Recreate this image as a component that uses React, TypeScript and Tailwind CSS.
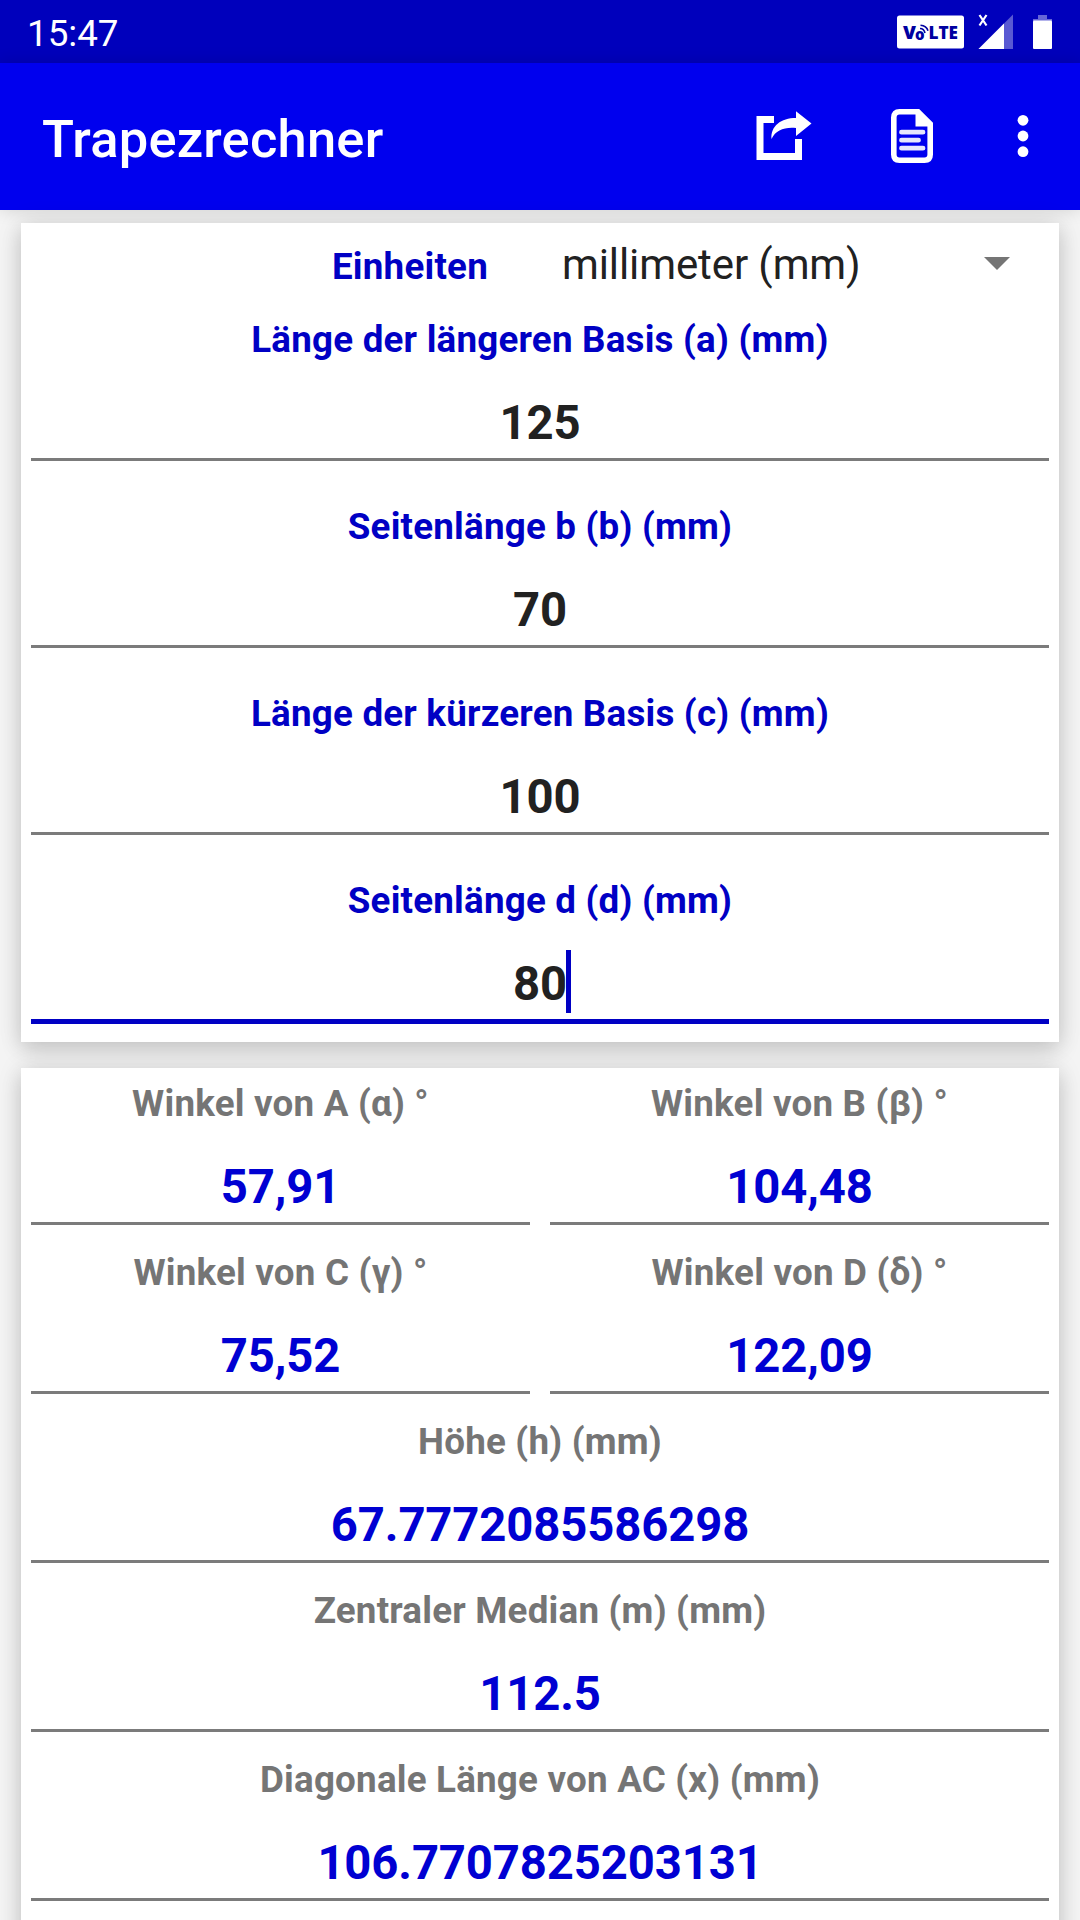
import { useState } from 'react';
import clsx from 'clsx';

type FieldProps = {
  label: string;
  value: string;
  result?: boolean;
  focused?: boolean;
  className?: string;
};

const inputs = [
  { id: 'a', label: 'Länge der längeren Basis (a) (mm)', value: '125' },
  { id: 'b', label: 'Seitenlänge b (b) (mm)', value: '70' },
  { id: 'c', label: 'Länge der kürzeren Basis (c) (mm)', value: '100' },
  { id: 'd', label: 'Seitenlänge d (d) (mm)', value: '80' },
];

const angles = [
  { label: 'Winkel von A (α) °', value: '57,91' },
  { label: 'Winkel von B (β) °', value: '104,48' },
  { label: 'Winkel von C (γ) °', value: '75,52' },
  { label: 'Winkel von D (δ) °', value: '122,09' },
];

const results = [
  { label: 'Höhe (h) (mm)', value: '67.7772085586298' },
  { label: 'Zentraler Median (m) (mm)', value: '112.5' },
  { label: 'Diagonale Länge von AC (x) (mm)', value: '106.7707825203131' },
];

function Field({ label, value, result, focused, className }: FieldProps) {
  return (
    <div className={clsx('flex flex-col text-center font-bold', className)}>
      <div
        className={clsx(
          'text-[36.75px] leading-[52px] tracking-[0.21px] whitespace-nowrap',
          result ? 'text-[#757575]' : 'text-[#0000c4]'
        )}>
        {label}
      </div>
      <div
        className={clsx(
          'pt-[26px] pb-[3px] text-[47.25px] leading-[63px] tracking-[-0.13px]',
          result ? 'text-[#0000d2]' : 'text-[#212121]',
          focused
            ? 'border-b-[5px] border-[#0000c4]'
            : 'border-b-[3px] border-[#7b7b7b]'
        )}>
        <span className="relative inline-block">
          {value}
          {focused && (
            <span className="absolute -top-[3px] left-full -ml-px h-[63px] w-[5px] bg-[#0000c4]" />
          )}
        </span>
      </div>
    </div>
  );
}

function StatusBar() {
  return (
    <div className="flex h-[63px] shrink-0 items-center justify-between bg-[#0000bc] pr-7 pl-[27px] text-white">
      <span className="pt-1 text-[36.75px] leading-[43px]">15:47</span>
      <div className="flex items-center">
        {/* VoLTE */}
        <svg width="67" height="34" viewBox="0 0 67 34" className="mr-[14px]">
          <rect width="67" height="33" y="0.5" rx="2.5" fill="#fff" />
          <g
            fill="#0000a0"
            fontFamily="'Open Sans', sans-serif"
            fontWeight="800"
            fontSize="18">
            <text x="6" y="24" textLength="13" lengthAdjust="spacingAndGlyphs">V</text>
            <text x="18" y="24.5" fontSize="15">o</text>
            <text x="31.500" y="24" textLength="29.500" lengthAdjust="spacingAndGlyphs">LTE</text>
          </g>
          <path
            d="M23 13.500q4 0 5 4.500M23.500 10.200q6 .5 7.500 5.500"
            fill="none"
            stroke="#0000a0"
            strokeWidth="1.6"
          />
        </svg>
        {/* Signal */}
        <svg width="36" height="36" viewBox="0 0 36 36" className="mr-[19px]">
          <path d="M0.500 35L35 0.500V35Z" fill="#fff" fillOpacity="0.35" />
          <path d="M0.500 35L26 9.500V35Z" fill="#fff" />
          <path d="M1.500 1L8.500 11.500M8.500 1L1.500 11.500" stroke="#fff" strokeWidth="2.2" />
        </svg>
        {/* Battery */}
        <svg width="19" height="34" viewBox="0 0 19 34">
          <path d="M5 0H14V4H19V6H0V4H5Z" fill="#fff" fillOpacity="0.4" />
          <rect y="5.500" width="19" height="28.500" rx="1" fill="#fff" />
        </svg>
      </div>
    </div>
  );
}

function AppBar() {
  return (
    <header className="flex h-[147px] shrink-0 items-center justify-between bg-[#0000ee] pr-[51px] pl-[42px] text-white shadow-[0_0_16px_rgba(0,0,0,0.14)]">
      <h1 className="pt-1 text-[52.5px] leading-[62px] font-medium tracking-[0.2px]">
        Trapezrechner
      </h1>
      <div className="flex items-center pb-0.5">
        <button aria-label="Teilen" className="mr-[79px]">
          <svg width="56" height="50" viewBox="0 0 56 50" className="block">
            <path
              d="M18 8.500H4V45.500H42.500V28"
              fill="none"
              stroke="#fff"
              strokeWidth="7"
            />
            <path d="M40 0.300L55.500 12.500L40 25V17C28 16 20 19 15.500 28C14.500 15 25 7 40 7Z" fill="#fff" />
          </svg>
        </button>
        <button aria-label="Bericht" className="mr-[84px]">
          <svg width="42" height="54" viewBox="0 0 42 54" className="block">
            <path
              d="M27 2.800H8.500Q2.800 2.800 2.800 8.500V45.500Q2.800 51.200 8.500 51.200H33.500Q39.200 51.200 39.200 45.500V15Z"
              fill="none"
              stroke="#fff"
              strokeWidth="5.600"
            />
            <path d="M24.500 1V17.500H41Z" fill="#fff" />
            <path
              d="M10.500 23.200H32M10.500 31.200H27.500M10.500 39.200H32"
              stroke="#fff"
              strokeWidth="4.800"
              strokeLinecap="round"
              opacity="0.9"
            />
          </svg>
        </button>
        <button aria-label="Mehr">
          <svg width="12" height="44" viewBox="0 0 12 44" className="block" fill="#fff">
            <circle cx="6" cy="6.300" r="5.400" />
            <circle cx="6" cy="22" r="5.400" />
            <circle cx="6" cy="37.700" r="5.400" />
          </svg>
        </button>
      </div>
    </header>
  );
}

export default function App() {
  const [active] = useState('d');

  return (
    <div className="flex h-[1920px] w-[1080px] flex-col overflow-hidden bg-[#f4f4f4] font-[Roboto,sans-serif]">
      <StatusBar />
      <AppBar />
      <main className="flex flex-col gap-[26px] px-[21px] pt-[13px]">
        <section className="h-[819px] shrink-0 bg-white px-2.5 shadow-[0_0_24px_rgba(0,0,0,0.11),0_9px_20px_rgba(0,0,0,0.14)]">
          <div className="flex h-[91px] pt-[17px] leading-[50px] whitespace-nowrap">
            <span className="w-[457px] pt-0.5 text-right text-[36.75px] font-bold tracking-[0.23px] text-[#0000c4]">
              Einheiten
            </span>
            <span className="ml-[74px] text-[42px] tracking-[-0.1px] text-[#212121]">
              millimeter (mm)
            </span>
            <svg width="26" height="13" viewBox="0 0 26 13" className="mt-[17px] mr-[39px] ml-auto">
              <path d="M0 0H26L13 13Z" fill="#757575" />
            </svg>
          </div>
          <div className="flex flex-col gap-10">
            {inputs.map((field) => (
              <Field
                key={field.id}
                label={field.label}
                value={field.value}
                focused={field.id === active}
              />
            ))}
          </div>
        </section>

        <section className="grid h-[900px] shrink-0 grid-cols-2 content-start gap-x-5 gap-y-[22px] bg-white px-2.5 pt-2.5 shadow-[0_0_24px_rgba(0,0,0,0.11),0_9px_20px_rgba(0,0,0,0.14)]">
          {angles.map((item) => (
            <Field key={item.label} result {...item} />
          ))}
          {results.map((item) => (
            <Field key={item.label} result className="col-span-2" {...item} />
          ))}
        </section>
      </main>
    </div>
  );
}
